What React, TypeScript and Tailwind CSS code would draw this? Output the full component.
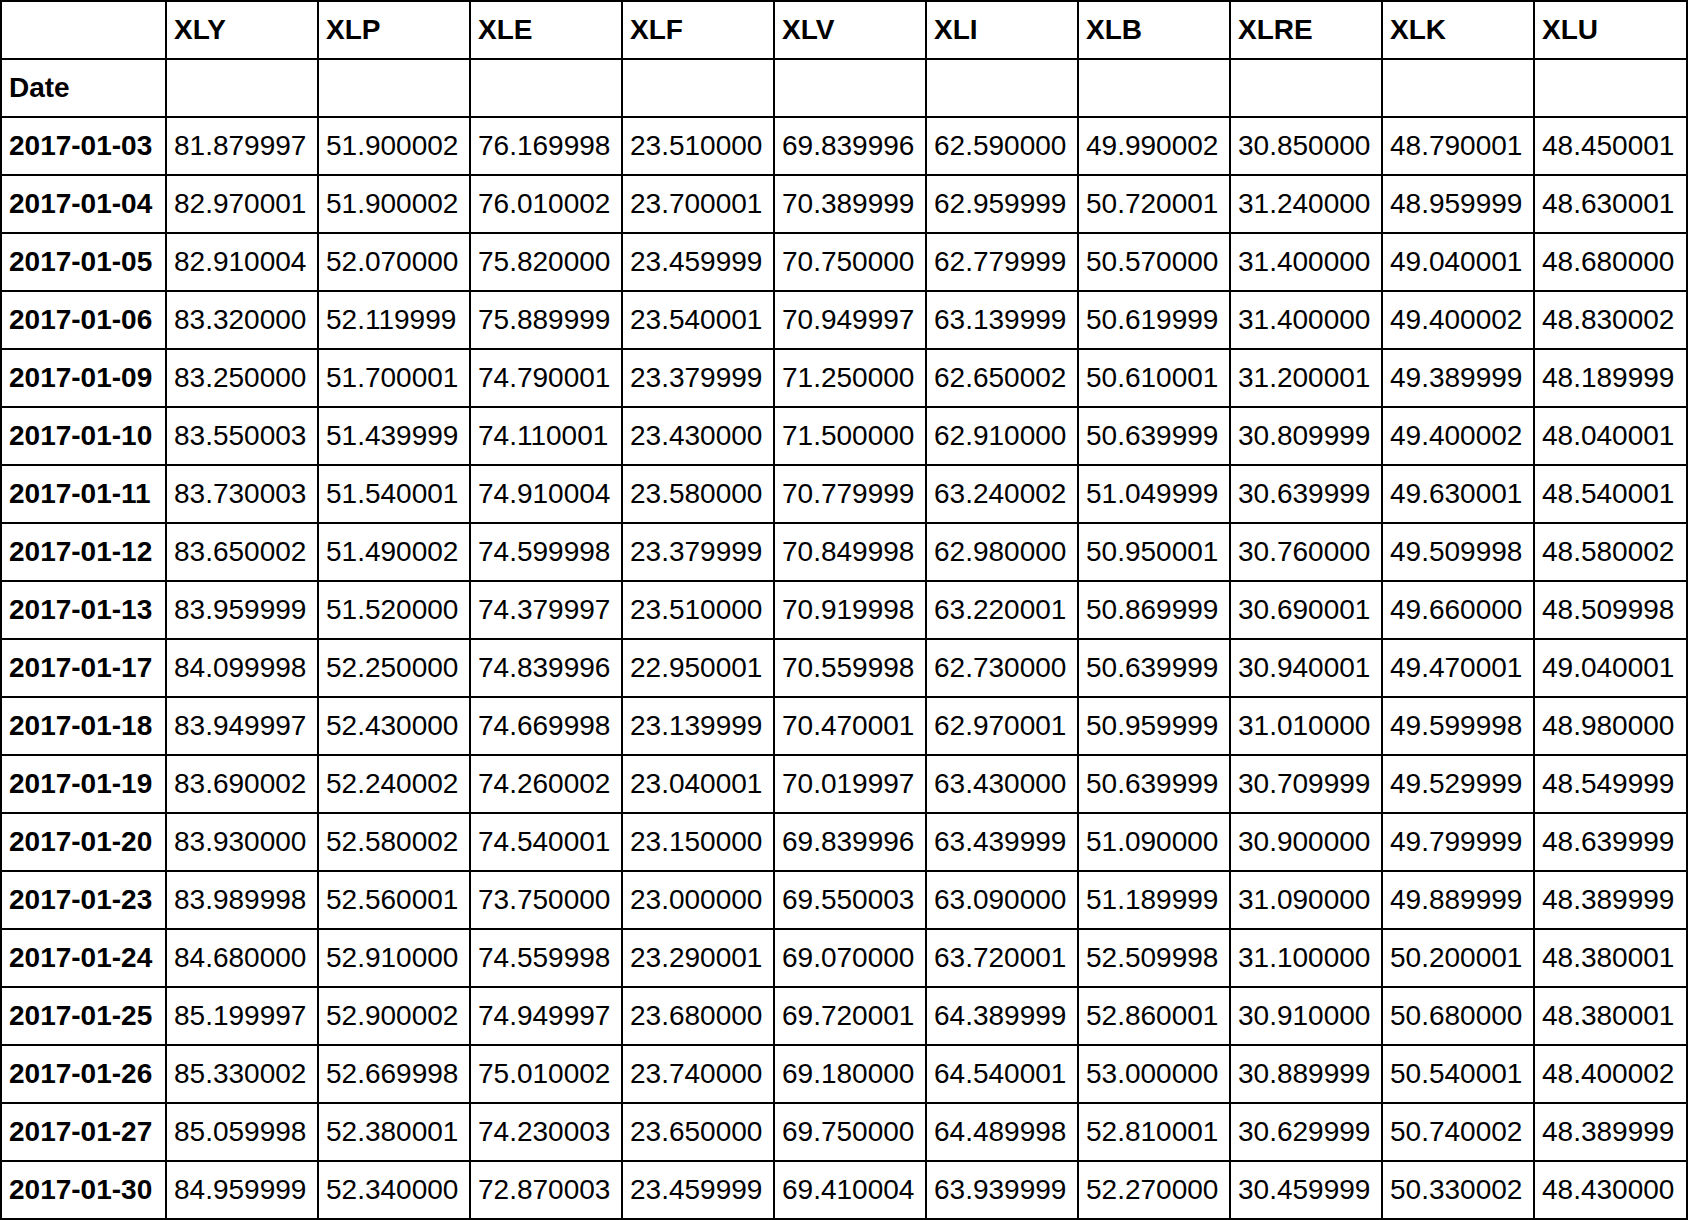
const columns = ["XLY", "XLP", "XLE", "XLF", "XLV", "XLI", "XLB", "XLRE", "XLK", "XLU"];

// date followed by the ten closing prices
const raw = `
2017-01-03 81.879997 51.900002 76.169998 23.510000 69.839996 62.590000 49.990002 30.850000 48.790001 48.450001
2017-01-04 82.970001 51.900002 76.010002 23.700001 70.389999 62.959999 50.720001 31.240000 48.959999 48.630001
2017-01-05 82.910004 52.070000 75.820000 23.459999 70.750000 62.779999 50.570000 31.400000 49.040001 48.680000
2017-01-06 83.320000 52.119999 75.889999 23.540001 70.949997 63.139999 50.619999 31.400000 49.400002 48.830002
2017-01-09 83.250000 51.700001 74.790001 23.379999 71.250000 62.650002 50.610001 31.200001 49.389999 48.189999
2017-01-10 83.550003 51.439999 74.110001 23.430000 71.500000 62.910000 50.639999 30.809999 49.400002 48.040001
2017-01-11 83.730003 51.540001 74.910004 23.580000 70.779999 63.240002 51.049999 30.639999 49.630001 48.540001
2017-01-12 83.650002 51.490002 74.599998 23.379999 70.849998 62.980000 50.950001 30.760000 49.509998 48.580002
2017-01-13 83.959999 51.520000 74.379997 23.510000 70.919998 63.220001 50.869999 30.690001 49.660000 48.509998
2017-01-17 84.099998 52.250000 74.839996 22.950001 70.559998 62.730000 50.639999 30.940001 49.470001 49.040001
2017-01-18 83.949997 52.430000 74.669998 23.139999 70.470001 62.970001 50.959999 31.010000 49.599998 48.980000
2017-01-19 83.690002 52.240002 74.260002 23.040001 70.019997 63.430000 50.639999 30.709999 49.529999 48.549999
2017-01-20 83.930000 52.580002 74.540001 23.150000 69.839996 63.439999 51.090000 30.900000 49.799999 48.639999
2017-01-23 83.989998 52.560001 73.750000 23.000000 69.550003 63.090000 51.189999 31.090000 49.889999 48.389999
2017-01-24 84.680000 52.910000 74.559998 23.290001 69.070000 63.720001 52.509998 31.100000 50.200001 48.380001
2017-01-25 85.199997 52.900002 74.949997 23.680000 69.720001 64.389999 52.860001 30.910000 50.680000 48.380001
2017-01-26 85.330002 52.669998 75.010002 23.740000 69.180000 64.540001 53.000000 30.889999 50.540001 48.400002
2017-01-27 85.059998 52.380001 74.230003 23.650000 69.750000 64.489998 52.810001 30.629999 50.740002 48.389999
2017-01-30 84.959999 52.340000 72.870003 23.459999 69.410004 63.939999 52.270000 30.459999 50.330002 48.430000
`;

const rows = raw
  .trim()
  .split("\n")
  .map((line) => line.trim().split(/\s+/));

const cell = "flex h-[56px] items-center bg-white pl-[7px] whitespace-nowrap";

export default function App() {
  return (
    <div className="min-h-screen bg-white font-['Liberation_Sans',Arial,sans-serif] text-[28px] leading-none text-black">
      <div className="grid w-[1688px] grid-cols-[163px_repeat(9,150px)_151px] gap-[2px] border-2 border-black bg-black">
        <div className={cell} />
        {columns.map((c) => (
          <div key={c} className={`${cell} font-bold`}>
            {c}
          </div>
        ))}

        <div className={`${cell} font-bold`}>Date</div>
        {columns.map((c) => (
          <div key={c} className={cell} />
        ))}

        {rows.map(([date, ...values]) => (
          <div key={date} className="contents">
            <div className={`${cell} font-bold`}>{date}</div>
            {values.map((v, i) => (
              <div key={i} className={cell}>
                {v}
              </div>
            ))}
          </div>
        ))}
      </div>
    </div>
  );
}
